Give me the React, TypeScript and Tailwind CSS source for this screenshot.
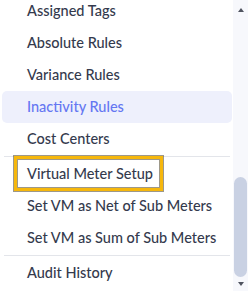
import React from 'react';

const topItems = ['Assigned Tags', 'Absolute Rules', 'Variance Rules', 'Inactivity Rules', 'Cost Centers'];
const vmItems = ['Virtual Meter Setup', 'Set VM as Net of Sub Meters', 'Set VM as Sum of Sub Meters'];

const Row: React.FC<{ label: string; active?: boolean; marked?: boolean }> = ({ label, active, marked }) => (
  <div
    className={`relative h-8 flex items-center pl-[25px] text-[14.5px] font-medium rounded-[5px] ${
      active ? 'bg-[#eef0fc] text-[#6577f2]' : 'text-[#343a4d]'
    }`}
  >
    {marked && (
      <span className="absolute left-[12px] top-[-2px] w-[149px] h-[35px] border-[3px] border-[#f6b70c] shadow-[0_0_0_1px_rgba(60,50,20,0.5),inset_0_0_0_1px_rgba(60,50,20,0.5)]" />
    )}
    <span className="relative">{label}</span>
  </div>
);

export default function App() {
  return (
    <div className="w-[248px] h-[291px] flex bg-white overflow-hidden" style={{ fontFamily: 'Lato, "Noto Sans", sans-serif' }}>
      <div className="w-[233px] h-full overflow-hidden">
        <div className="mt-[-5px] pl-[2px] pr-[1px]">
          {topItems.map((t) => (
            <Row key={t} label={t} active={t === 'Inactivity Rules'} />
          ))}
          <div className="mx-[2px] my-px h-px bg-[#e3e5ea]" />
          {vmItems.map((t, i) => (
            <Row key={t} label={t} marked={i === 0} />
          ))}
          <div className="mx-[2px] my-px h-px bg-[#e3e5ea]" />
          <Row label="Audit History" />
        </div>
      </div>
      <div className="w-[15px] h-full bg-[#f7f8fc] flex flex-col items-center">
        <div className="h-[16px] flex items-center justify-center pt-[4px]">
          <div className="w-0 h-0 border-l-[3.5px] border-r-[3.5px] border-b-[4px] border-l-transparent border-r-transparent border-b-[#505460]" />
        </div>
        <div className="flex-1" />
        <div className="w-[13px] h-[100px] rounded-[7px] bg-[#c9d1e3]" />
        <div className="h-[14px] flex items-center justify-center">
          <div className="w-0 h-0 border-l-[3.5px] border-r-[3.5px] border-t-[4px] border-l-transparent border-r-transparent border-t-[#505460]" />
        </div>
      </div>
    </div>
  );
}
